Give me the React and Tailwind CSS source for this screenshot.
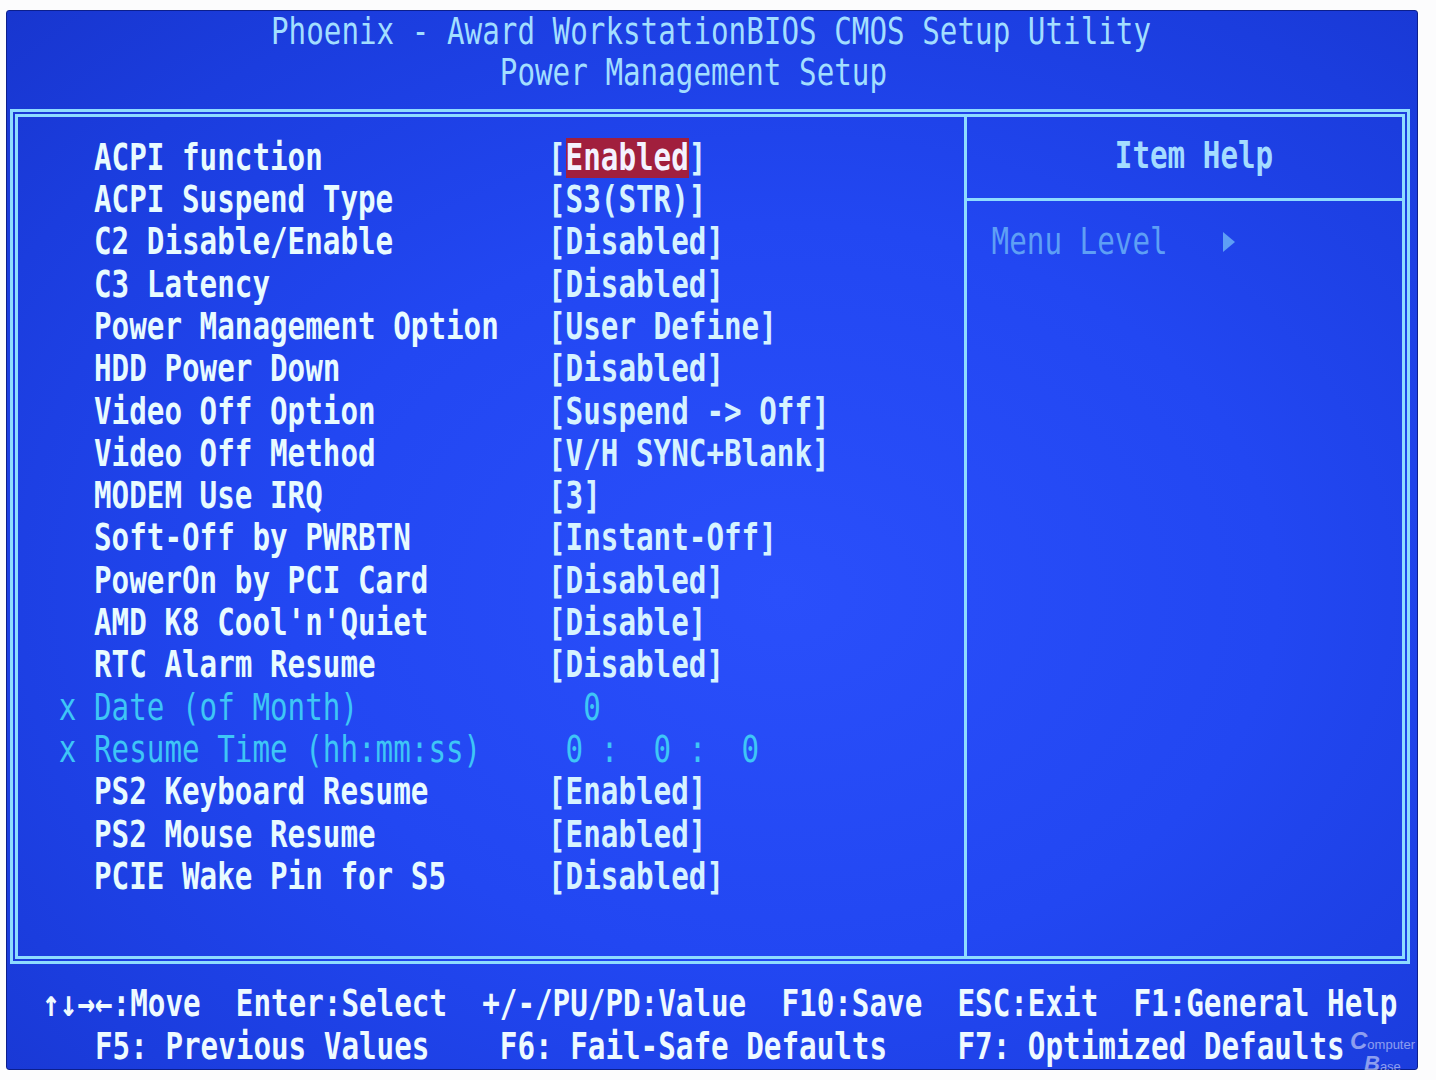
import React from 'react';

// BIOS text grid: 80 x 25 cells, 17.6px wide, 42.33px tall
const T = ({ children, className = '' }) => (
  <span className={`inline-block origin-center scale-y-[1.25] whitespace-pre ${className}`}>{children}</span>
);

const items = [
  { label: 'ACPI function', value: 'Enabled', selected: true },
  { label: 'ACPI Suspend Type', value: '[S3(STR)]' },
  { label: 'C2 Disable/Enable', value: '[Disabled]' },
  { label: 'C3 Latency', value: '[Disabled]' },
  { label: 'Power Management Option', value: '[User Define]' },
  { label: 'HDD Power Down', value: '[Disabled]' },
  { label: 'Video Off Option', value: '[Suspend -> Off]' },
  { label: 'Video Off Method', value: '[V/H SYNC+Blank]' },
  { label: 'MODEM Use IRQ', value: '[3]' },
  { label: 'Soft-Off by PWRBTN', value: '[Instant-Off]' },
  { label: 'PowerOn by PCI Card', value: '[Disabled]' },
  { label: "AMD K8 Cool'n'Quiet", value: '[Disable]' },
  { label: 'RTC Alarm Resume', value: '[Disabled]' },
  { label: 'Date (of Month)', value: '  0', off: true },
  { label: 'Resume Time (hh:mm:ss)', value: ' 0 :  0 :  0', off: true },
  { label: 'PS2 Keyboard Resume', value: '[Enabled]' },
  { label: 'PS2 Mouse Resume', value: '[Enabled]' },
  { label: 'PCIE Wake Pin for S5', value: '[Disabled]' },
];

const SettingRow = ({ item }) => {
  const labelColor = item.off ? 'text-[#3ec6f6] font-normal' : 'text-[#e8fbff] font-bold';
  const valueColor = item.off ? 'text-[#3ec6f6] font-normal' : 'text-[#d6f3ff] font-bold';

  return (
    <div className="flex h-[42.33px] items-center">
      <span className="w-[35.2px]">{item.off && <T className="text-[#3ec6f6]">x</T>}</span>
      <span className={`w-[454px] ${labelColor}`}>
        <T>{item.label}</T>
      </span>
      {item.selected ? (
        <span className={`flex h-full items-center ${valueColor}`}>
          <T>[</T>
          <span className="flex h-[40px] items-center bg-[#a11f3d] text-[#f4f2ff]">
            <T>{item.value}</T>
          </span>
          <T>]</T>
        </span>
      ) : (
        <span className={valueColor}>
          <T>{item.value}</T>
        </span>
      )}
    </div>
  );
};

export default function App() {
  return (
    <div
      className="relative h-[1080px] w-[1436px] overflow-hidden bg-[#fcfcfd] pt-[10px] pl-[6px] text-[29.24px] leading-none"
      style={{ fontFamily: '"DejaVu Sans Mono", "Liberation Mono", monospace' }}
    >
      <div className="h-[1060px] w-[1412px] rounded-[3px] border border-[#0c1f8c] bg-[radial-gradient(ellipse_at_55%_55%,#2a4ffb_0%,#2247f2_45%,#1b3dde_80%,#1836cf_100%)]">
        {/* title */}
        <div className="flex h-[42.33px] items-center text-[#a2deff]">
          <T>{'               Phoenix - Award WorkstationBIOS CMOS Setup Utility'}</T>
        </div>
        <div className="flex h-[41px] items-center text-[#a2deff]">
          <T>{'                            Power Management Setup'}</T>
        </div>

        {/* double frame */}
        <div className="ml-[3px] mt-[14.67px] h-[855px] w-[1400px] border-[3px] border-[#8edcff] p-[2px]">
          <div className="flex h-full border-[3px] border-[#8edcff]">
            <div className="w-[949px] border-r-[3px] border-[#8edcff] pl-[40.8px] pt-[20px]">
              {items.map((item, i) => (
                <SettingRow key={i} item={item} />
              ))}
            </div>

            <div className="flex flex-1 flex-col">
              <div className="h-[84px] border-b-[3px] border-[#8edcff] pl-[147.8px] pt-[18px]">
                <div className="flex h-[42.33px] items-center font-bold text-[#a4dcff]">
                  <T>Item Help</T>
                </div>
              </div>
              <div className="pl-[24.6px] pt-[20px]">
                <div className="flex h-[42.33px] items-center text-[#5e9ff5]">
                  <T>{'Menu Level   '}</T>
                  <span className="flex w-[17.6px] justify-center">
                    <svg width="14" height="20" viewBox="0 0 14 20">
                      <polygon points="1,0 13,10 1,20" fill="#5e9ff5" />
                    </svg>
                  </span>
                </div>
              </div>
            </div>
          </div>
        </div>

        {/* key help */}
        <div className="mt-[19.67px] font-bold text-[#eefaff]">
          <div className="flex h-[42.33px] items-center">
            <T>{'  ↑↓→←:Move  Enter:Select  +/-/PU/PD:Value  F10:Save  ESC:Exit  F1:General Help'}</T>
          </div>
          <div className="flex h-[42.33px] items-center">
            <T>{'     F5: Previous Values    F6: Fail-Safe Defaults    F7: Optimized Defaults'}</T>
          </div>
        </div>
      </div>

      {/* watermark */}
      <div
        className="absolute left-[1350px] top-[1029px] text-white/50"
        style={{ fontFamily: '"Liberation Sans", Arial, sans-serif' }}
      >
        <div className="flex items-end">
          <span className="text-[24px] font-bold italic leading-none">C</span>
          <span className="mb-[2px] text-[13px] leading-none">omputer</span>
        </div>
        <div className="ml-[14px] flex items-end">
          <span className="text-[22px] font-bold italic leading-none">B</span>
          <span className="mb-[2px] text-[13px] leading-none">ase</span>
        </div>
      </div>
    </div>
  );
}
